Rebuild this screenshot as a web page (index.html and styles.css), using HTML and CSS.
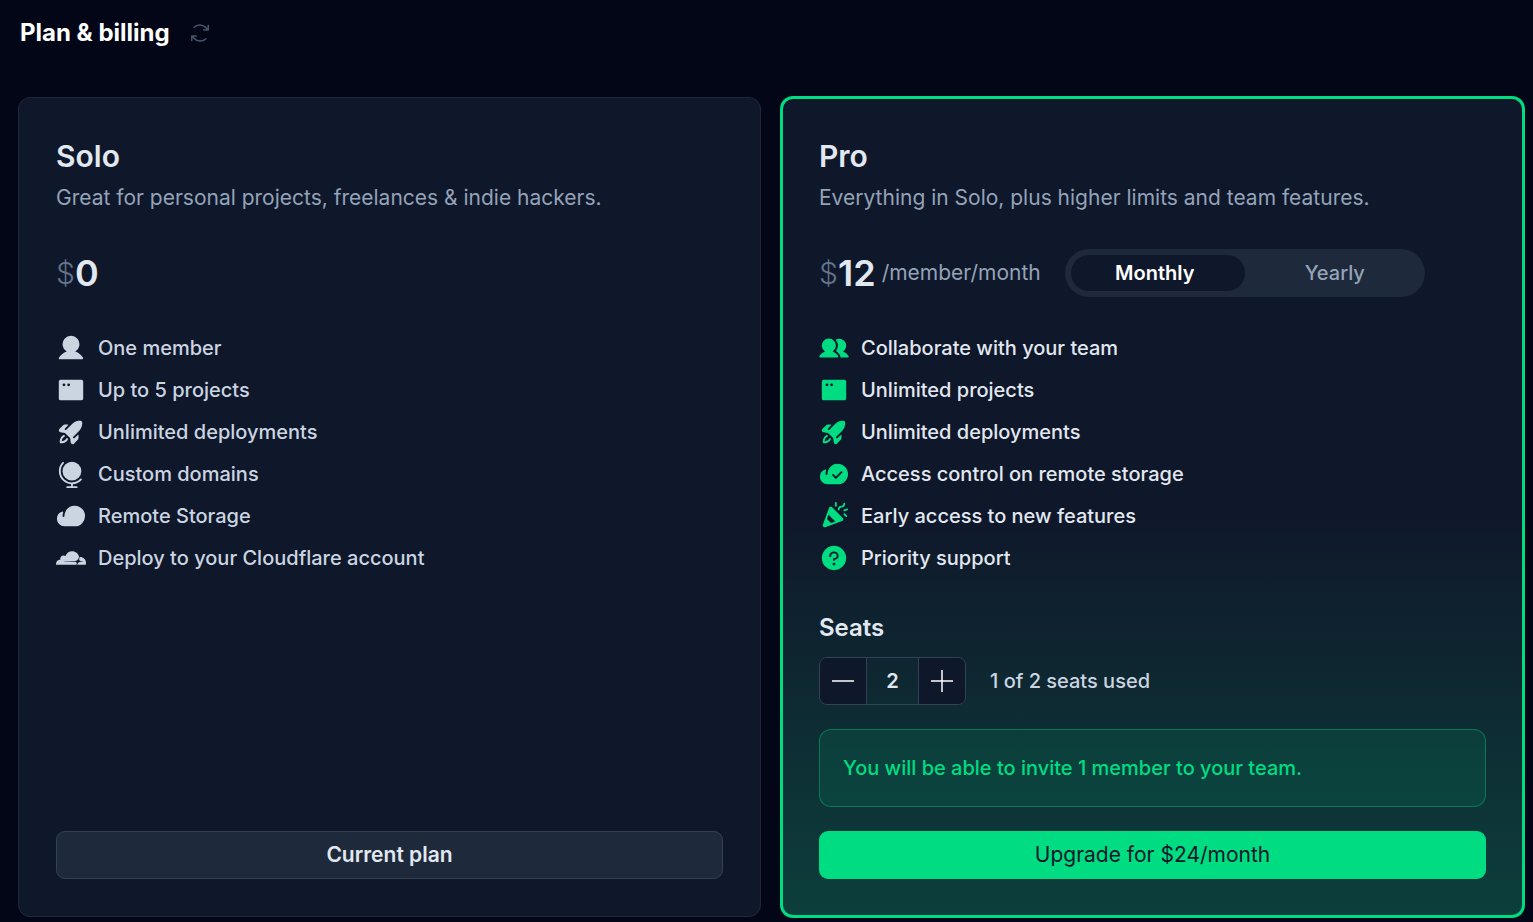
FILE: index.html
```html
<!DOCTYPE html>
<html lang="en">
<head>
<meta charset="utf-8">
<meta name="viewport" content="width=device-width, initial-scale=1">
<title>Plan &amp; billing</title>
<link rel="stylesheet" href="styles.css">
</head>
<body>
<svg class="sprite" aria-hidden="true">
  <symbol id="refresh" viewBox="0 0 256 256"><path d="M224,48V96a8,8,0,0,1-8,8H168a8,8,0,0,1,0-16h28.69L182.06,73.37a79.56,79.56,0,0,0-56.13-23.43h-.45A79.52,79.52,0,0,0,69.59,72.71,8,8,0,0,1,58.41,61.27a96,96,0,0,1,135,.79L208,76.69V48a8,8,0,0,1,16,0ZM186.41,183.29a80,80,0,0,1-112.47-.66L59.31,168H88a8,8,0,0,0,0-16H40a8,8,0,0,0-8,8v48a8,8,0,0,0,16,0V179.31l14.63,14.63A95.43,95.43,0,0,0,130,222.06h.53a95.36,95.36,0,0,0,67.07-27.33,8,8,0,0,0-11.18-11.44Z"/></symbol>
  <symbol id="user" viewBox="0 0 256 256"><path d="M230.93,220a8,8,0,0,1-6.93,4H32a8,8,0,0,1-6.92-12c15.23-26.33,38.7-45.21,66.09-54.16a72,72,0,1,1,73.66,0c27.39,8.95,50.86,27.83,66.09,54.16A8,8,0,0,1,230.93,220Z"/></symbol>
  <symbol id="window" viewBox="0 0 256 256"><path d="M216,40H40A16,16,0,0,0,24,56V200a16,16,0,0,0,16,16H216a16,16,0,0,0,16-16V56A16,16,0,0,0,216,40ZM68,96A12,12,0,1,1,80,84,12,12,0,0,1,68,96Zm40,0a12,12,0,1,1,12-12A12,12,0,0,1,108,96Z"/></symbol>
  <symbol id="rocket" viewBox="0 0 256 256"><path d="M101.85,191.14C97.34,201,82.29,224,40,224a8,8,0,0,1-8-8c0-42.29,23-57.34,32.86-61.85a8,8,0,0,1,6.64,14.56c-6.43,2.93-20.62,12.36-23.12,38.91,26.55-2.5,36-16.69,38.91-23.12a8,8,0,1,1,14.56,6.64Zm122-144a16,16,0,0,0-15-15c-12.58-.75-44.73.4-71.4,27.07h0L88,108.7A8,8,0,0,1,76.67,97.39l26.56-26.57A4,4,0,0,0,100.41,64H74.35A15.9,15.9,0,0,0,63,68.68L28.7,103a16,16,0,0,0,9.07,27.16l38.47,5.37,44.21,44.21,5.37,38.49a15.94,15.94,0,0,0,10.78,12.92,16.11,16.11,0,0,0,5.1.83A15.91,15.91,0,0,0,153,227.3L187.32,193A16,16,0,0,0,192,181.65V155.59a4,4,0,0,0-6.83-2.82l-26.57,26.56a8,8,0,0,1-11.71-.42,8.2,8.2,0,0,1,.6-11.1l49.27-49.27h0C223.45,91.86,224.6,59.71,223.85,47.12Z"/></symbol>
  <symbol id="globe" viewBox="0 0 256 256"><circle cx="136" cy="104" r="80"/><path d="M60,33A104,104,0,1,0,213,174M136,208v32M96,240h80" fill="none" stroke="currentColor" stroke-width="16" stroke-linecap="round"/></symbol>
  <symbol id="cloud" viewBox="0 0 256 256"><path d="M160.06,40A88.1,88.1,0,0,0,81.29,88.67h0A87.48,87.48,0,0,0,72,127.73,8.18,8.18,0,0,1,64.57,136,8,8,0,0,1,56,128a103.66,103.66,0,0,1,5.34-32.92,4,4,0,0,0-4.75-5.18A64.09,64.09,0,0,0,8,152c0,35.19,29.75,64,65,64H160a88.09,88.09,0,0,0,87.93-91.48C246.11,77.54,207.07,40,160.06,40Z"/></symbol>
  <symbol id="cloud-check" viewBox="0 0 256 256"><path fill-rule="evenodd" d="M160.06,40A88.1,88.1,0,0,0,81.29,88.67h0A87.48,87.48,0,0,0,72,127.73,8.18,8.18,0,0,1,64.57,136,8,8,0,0,1,56,128a103.66,103.66,0,0,1,5.34-32.92,4,4,0,0,0-4.75-5.18A64.09,64.09,0,0,0,8,152c0,35.19,29.75,64,65,64H160a88.09,88.09,0,0,0,87.93-91.48C246.11,77.54,207.07,40,160.06,40ZM197.66,117.66l-48,48a8,8,0,0,1-11.32,0l-24-24a8,8,0,0,1,11.32-11.32L144,148.69l42.34-42.35a8,8,0,0,1,11.32,11.32Z"/></symbol>
  <symbol id="cloudflare" viewBox="0 0 24 24"><path d="M16.5088 16.8447c.1475-.5068.0908-.9707-.1553-1.3154-.2246-.3164-.6045-.499-1.0615-.5205l-8.6592-.1123a.1559.1559 0 0 1-.1333-.0713c-.0283-.042-.0351-.0986-.021-.1553.0278-.084.1123-.1484.2036-.1562l8.7359-.1123c1.0351-.0489 2.1601-.8868 2.5537-1.9136l.499-1.3013c.0215-.0561.0293-.1128.0147-.168-.5625-2.5463-2.835-4.4453-5.5499-4.4453-2.5039 0-4.6284 1.6177-5.3876 3.8614-.4927-.3658-1.1187-.5625-1.794-.499-1.2026.119-2.1665 1.083-2.2861 2.2856-.0283.31-.0069.6128.0635.894C1.5683 13.171 0 14.7754 0 16.752c0 .1748.0142.3515.0352.5273.0141.083.0844.1475.1689.1475h15.9814c.0909 0 .1758-.0645.2032-.1553l.12-.4268zm2.7568-5.5634c-.0771 0-.1611 0-.2383.0112-.0566 0-.1054.0415-.127.0976l-.3378 1.1744c-.1475.5068-.0918.9707.1543 1.3164.2256.3164.6055.498 1.0625.5195l1.8437.1133c.0557 0 .1055.0263.1329.0703.0283.043.0351.1074.0214.1562-.0283.084-.1132.1485-.204.1553l-1.921.1123c-1.041.0488-2.1582.8867-2.5527 1.914l-.1406.3585c-.0283.0713.0215.1416.0986.1416h6.5977c.0771 0 .1474-.0489.169-.126.1122-.4082.1757-.837.1757-1.2803 0-2.6025-2.125-4.727-4.7344-4.727"/></symbol>
  <symbol id="users" viewBox="0 0 256 256"><path d="M164.47,195.63a8,8,0,0,1-6.7,12.37H10.23a8,8,0,0,1-6.7-12.37,95.83,95.83,0,0,1,47.22-37.71,60,60,0,1,1,66.5,0A95.83,95.83,0,0,1,164.47,195.63Zm87.91-.15a95.87,95.87,0,0,0-47.13-37.56A60,60,0,0,0,144.7,54.59a4,4,0,0,0-1.33,6A75.83,75.83,0,0,1,147,150.53a4,4,0,0,0,1.07,5.53,112.32,112.32,0,0,1,29.85,30.83,23.92,23.92,0,0,1,3.65,16.47,4,4,0,0,0,3.95,4.64h60.3a8,8,0,0,0,7.73-5.93A8.22,8.22,0,0,0,252.38,195.48Z"/></symbol>
  <symbol id="confetti" viewBox="0 0 256 256"><path fill-rule="evenodd" d="M111.49,52.63a15.8,15.8,0,0,0-26,5.77L33,202.78A15.83,15.83,0,0,0,47.76,224a16,16,0,0,0,5.46-1l144.37-52.5a15.8,15.8,0,0,0,5.78-26ZM68.16,152.84L81.32,116.63L139.37,174.68L103.16,187.84ZM160,72a37.8,37.8,0,0,1,3.84-15.58C169.14,45.83,179.14,40,192,40c6.7,0,11-2.29,13.65-7.21A22,22,0,0,0,208,23.94,8,8,0,0,1,224,24c0,12.86-8.52,32-32,32-6.7,0-11,2.29-13.65,7.21A22,22,0,0,0,176,72.06,8,8,0,0,1,160,72ZM136,40V16a8,8,0,0,1,16,0V40a8,8,0,0,1-16,0Zm101.66,82.34a8,8,0,1,1-11.32,11.31l-16-16a8,8,0,0,1,11.32-11.32Zm4.87-42.75-24,8a8,8,0,0,1-5.06-15.18l24-8a8,8,0,0,1,5.06,15.18Z"/></symbol>
  <symbol id="question" viewBox="0 0 256 256"><path d="M128,24A104,104,0,1,0,232,128,104.11,104.11,0,0,0,128,24Zm0,168a12,12,0,1,1,12-12A12,12,0,0,1,128,192Zm8-48.72V144a8,8,0,0,1-16,0v-8a8,8,0,0,1,8-8c13.23,0,24-9,24-20s-10.77-20-24-20-24,9-24,20v4a8,8,0,0,1-16,0v-4c0-19.85,17.94-36,40-36s40,16.15,40,36C168,125.38,154.24,139.93,136,143.28Z"/></symbol>
  <symbol id="minus" viewBox="0 0 24 24"><rect x="1" y="11.25" width="22" height="1.5"/></symbol>
  <symbol id="plus" viewBox="0 0 24 24"><path d="M1,11.25H11.25V1H12.75V11.25H23V12.75H12.75V23H11.25V12.75H1Z"/></symbol>
</svg>

<header class="page-header">
  <h1 class="page-title">Plan &amp; billing</h1>
  <button class="refresh" type="button" aria-label="Refresh"><svg class="refresh-icon" aria-hidden="true"><use href="#refresh"/></svg></button>
</header>

<main class="plans">
  <section class="plan">
    <h2 class="plan-name">Solo</h2>
    <p class="plan-summary">Great for personal projects, freelances &amp; indie hackers.</p>
    <div class="price-row">
      <p class="price"><span class="currency">$</span><span class="amount">0</span></p>
    </div>
    <ul class="features">
      <li class="feature"><svg class="icon" aria-hidden="true"><use href="#user"/></svg>One member</li>
      <li class="feature"><svg class="icon" aria-hidden="true"><use href="#window"/></svg>Up to 5 projects</li>
      <li class="feature"><svg class="icon" aria-hidden="true"><use href="#rocket"/></svg>Unlimited deployments</li>
      <li class="feature"><svg class="icon" aria-hidden="true"><use href="#globe"/></svg>Custom domains</li>
      <li class="feature"><svg class="icon" aria-hidden="true"><use href="#cloud"/></svg>Remote Storage</li>
      <li class="feature"><svg class="icon" aria-hidden="true"><use href="#cloudflare"/></svg>Deploy to your Cloudflare account</li>
    </ul>
    <button class="action action-current" type="button">Current plan</button>
  </section>

  <section class="plan plan-pro">
    <h2 class="plan-name">Pro</h2>
    <p class="plan-summary">Everything in Solo, plus higher limits and team features.</p>
    <div class="price-row">
      <p class="price"><span class="currency">$</span><span class="amount">12</span><span class="period">/member/month</span></p>
      <div class="billing-cycle" role="group" aria-label="Billing cycle">
        <button class="cycle cycle-active" type="button" aria-pressed="true">Monthly</button>
        <button class="cycle" type="button" aria-pressed="false">Yearly</button>
      </div>
    </div>
    <ul class="features">
      <li class="feature"><svg class="icon" aria-hidden="true"><use href="#users"/></svg>Collaborate with your team</li>
      <li class="feature"><svg class="icon" aria-hidden="true"><use href="#window"/></svg>Unlimited projects</li>
      <li class="feature"><svg class="icon" aria-hidden="true"><use href="#rocket"/></svg>Unlimited deployments</li>
      <li class="feature"><svg class="icon" aria-hidden="true"><use href="#cloud-check"/></svg>Access control on remote storage</li>
      <li class="feature"><svg class="icon" aria-hidden="true"><use href="#confetti"/></svg>Early access to new features</li>
      <li class="feature"><svg class="icon" aria-hidden="true"><use href="#question"/></svg>Priority support</li>
    </ul>
    <label class="seats-label" for="seats">Seats</label>
    <div class="seats-row">
      <div class="stepper">
        <button class="step" type="button" aria-label="Remove a seat"><svg class="step-icon" aria-hidden="true"><use href="#minus"/></svg></button>
        <input class="seat-count" id="seats" type="text" inputmode="numeric" value="2">
        <button class="step" type="button" aria-label="Add a seat"><svg class="step-icon" aria-hidden="true"><use href="#plus"/></svg></button>
      </div>
      <p class="seats-used">1 of 2 seats used</p>
    </div>
    <p class="notice">You will be able to invite 1 member to your team.</p>
    <button class="action action-upgrade" type="button">Upgrade for $24/month</button>
  </section>
</main>
</body>
</html>
```

FILE: styles.css
```css
:root {
  --page: #020617;
  --card: #0f172a;
  --raised: #1e293b;
  --line: #334155;
  --dim: #64748b;
  --muted: #94a3b8;
  --soft: #cbd5e1;
  --text: #e2e8f0;
  --green: #00dc82;
}

* {
  box-sizing: border-box;
}

body {
  margin: 0;
  background: var(--page);
  color: var(--text);
  font-family: Inter, "Liberation Sans", sans-serif;
  font-size: 20px;
  line-height: 30px;
}

h1, h2, p, ul {
  margin: 0;
  padding: 0;
}

button, input {
  font: inherit;
  color: inherit;
}

button {
  padding: 0;
  border: 0;
  background: none;
  cursor: pointer;
}

svg {
  display: block;
  fill: currentColor;
}

.sprite {
  display: none;
}

.page-header {
  display: flex;
  align-items: center;
  gap: 18px;
  padding: 18px 20px 49px;
}

.page-title {
  color: #fff;
  font-size: 24px;
  font-weight: 700;
  line-height: 30px;
}

.refresh {
  color: #475569;
}

.refresh-icon {
  width: 24px;
  height: 24px;
}

.plans {
  display: grid;
  grid-template-columns: repeat(2, minmax(0, 1fr));
  gap: 20px;
  padding: 0 9px 5px 18px;
}

.plan {
  display: flex;
  flex-direction: column;
  padding: 37px;
  border: 1px solid var(--raised);
  border-radius: 12px;
  background: var(--card);
  color: var(--soft);
}

.plan-pro {
  padding: 36px;
  border: 2px solid var(--green);
  background: linear-gradient(to bottom, transparent 50%, rgb(0 220 130 / 20%)) var(--card);
  box-shadow: 0 0 0 1px var(--green);
  color: var(--text);
}

.plan-name {
  margin-bottom: 6px;
  color: var(--text);
  font-size: 30px;
  font-weight: 600;
  line-height: 42px;
}

.plan-summary {
  margin-bottom: 36px;
  color: var(--muted);
  font-size: 21px;
}

.price-row {
  display: flex;
  align-items: center;
  gap: 24px;
  height: 48px;
  margin-bottom: 36px;
}

.price {
  display: flex;
  align-items: center;
  font-size: 36px;
  line-height: 48px;
}

.currency {
  color: var(--dim);
  font-size: 30px;
  font-weight: 300;
}

.amount {
  color: var(--text);
  font-weight: 600;
}

.period {
  margin-left: 6px;
  color: var(--muted);
  font-size: 21px;
}

.billing-cycle {
  display: grid;
  grid-template-columns: 1fr 1fr;
  width: 360px;
  height: 48px;
  border-radius: 24px;
  background: var(--raised);
}

.cycle {
  position: relative;
  z-index: 0;
  color: var(--muted);
  font-weight: 500;
}

.cycle-active {
  color: #fff;
  font-weight: 600;
}

.cycle-active::before {
  content: "";
  position: absolute;
  z-index: -1;
  inset: 6px 0 6px 6px;
  border-radius: 18px;
  background: var(--card);
}

.features {
  display: grid;
  gap: 12px;
  margin-bottom: 40px;
  font-weight: 500;
  list-style: none;
}

.feature {
  display: flex;
  align-items: center;
  gap: 12px;
}

.icon {
  flex: none;
  width: 30px;
  height: 30px;
}

.plan-pro .icon {
  color: var(--green);
}

.seats-label {
  margin-bottom: 14px;
  font-size: 24px;
  font-weight: 600;
}

.seats-row {
  display: flex;
  align-items: center;
  gap: 24px;
  margin-bottom: 24px;
}

.stepper {
  display: flex;
  height: 48px;
  border: 1px solid var(--line);
  border-radius: 8px;
  overflow: hidden;
}

.step {
  display: grid;
  place-items: center;
  width: 46px;
  background: var(--card);
  color: #fff;
}

.step-icon {
  width: 24px;
  height: 24px;
}

.seat-count {
  width: 53px;
  padding: 0;
  border: solid var(--line);
  border-width: 0 1px;
  background: none;
  font-weight: 600;
  text-align: center;
}

.seats-used {
  color: var(--soft);
  font-weight: 500;
}

.notice {
  margin-bottom: 24px;
  padding: 23px;
  border: 1px solid rgb(0 220 130 / 36%);
  border-radius: 12px;
  background: rgb(0 220 130 / 10%);
  color: var(--green);
  font-weight: 500;
}

.action {
  height: 48px;
  margin-top: auto;
  border-radius: 9px;
  font-size: 21px;
}

.action-current {
  border: 1px solid var(--line);
  background: var(--raised);
  color: var(--text);
  font-weight: 600;
}

.action-upgrade {
  background: var(--green);
  color: var(--card);
}
```
